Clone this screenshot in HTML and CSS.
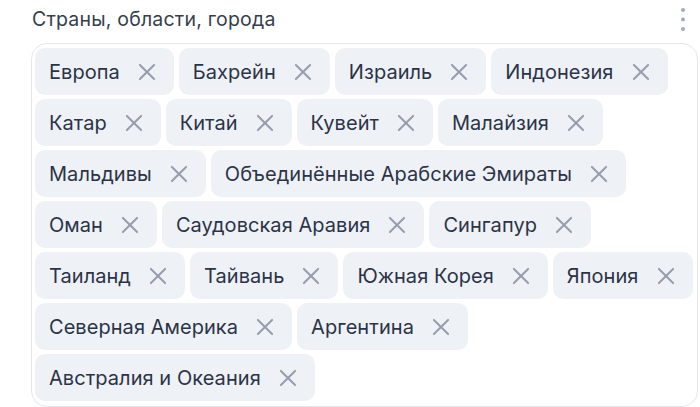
FILE: index.html
```html
<!DOCTYPE html>
<html lang="ru">
<head>
<meta charset="utf-8">
<link rel="stylesheet" href="styles.css">
</head>
<body>
<div class="field">
  <div class="field-head">
    <div class="label">Страны, области, города</div>
    <button class="more" aria-label="Ещё">
      <svg width="6" height="24" viewBox="0 0 6 24"><circle cx="3" cy="3" r="2"/><circle cx="3" cy="12.5" r="2"/><circle cx="3" cy="22" r="2"/></svg>
    </button>
  </div>
  <div class="box">
    <span class="chip">Европа<i class="x"></i></span>
    <span class="chip">Бахрейн<i class="x"></i></span>
    <span class="chip">Израиль<i class="x"></i></span>
    <span class="chip">Индонезия<i class="x"></i></span>
    <span class="chip">Катар<i class="x"></i></span>
    <span class="chip">Китай<i class="x"></i></span>
    <span class="chip">Кувейт<i class="x"></i></span>
    <span class="chip">Малайзия<i class="x"></i></span>
    <span class="chip">Мальдивы<i class="x"></i></span>
    <span class="chip">Объединённые Арабские Эмираты<i class="x"></i></span>
    <span class="chip">Оман<i class="x"></i></span>
    <span class="chip">Саудовская Аравия<i class="x"></i></span>
    <span class="chip">Сингапур<i class="x"></i></span>
    <span class="chip">Таиланд<i class="x"></i></span>
    <span class="chip">Тайвань<i class="x"></i></span>
    <span class="chip">Южная Корея<i class="x"></i></span>
    <span class="chip">Япония<i class="x"></i></span>
    <span class="chip">Северная Америка<i class="x"></i></span>
    <span class="chip">Аргентина<i class="x"></i></span>
    <span class="chip">Австралия и Океания<i class="x"></i></span>
  </div>
</div>
</body>
</html>
```

FILE: styles.css
```css
html, body {
  margin: 0;
  padding: 0;
  background: #ffffff;
}
body {
  font-family: Inter, "Noto Sans", sans-serif;
  color: #2b3447;
}
.field {
  padding: 5px 2px 0 31px;
}
.field-head {
  display: flex;
  justify-content: space-between;
  align-items: flex-start;
  height: 38px;
}
.label {
  font-size: 19.5px;
  line-height: 28px;
  letter-spacing: 0.2px;
  color: #363e4d;
  padding-left: 1px;
}
.more {
  border: 0;
  background: none;
  padding: 0;
  margin: 2px 12px 0 0;
  width: 6px;
  height: 24px;
  fill: #a5abba;
}
.more svg {
  display: block;
}
.box {
  border: 1px solid #e4e7ed;
  border-radius: 16px;
  padding: 4px 2px 4px 3px;
  display: flex;
  flex-wrap: wrap;
  gap: 4px 5px;
  min-height: 364px;
  align-content: flex-start;
  box-sizing: border-box;
}
.chip {
  display: inline-flex;
  align-items: center;
  height: 47px;
  box-sizing: border-box;
  padding: 0 18px 0 14px;
  background: #eef1f6;
  border-radius: 10px;
  font-size: 20px;
  line-height: 24px;
  letter-spacing: 0.05px;
  color: #2b3447;
  white-space: nowrap;
}
.x {
  position: relative;
  width: 18px;
  height: 18px;
  margin-left: 18px;
  display: inline-block;
}
.x::before, .x::after {
  content: "";
  position: absolute;
  left: -2px;
  top: 8px;
  width: 22px;
  height: 2px;
  background: #969dae;
  border-radius: 1px;
}
.x::before { transform: rotate(45deg); }
.x::after { transform: rotate(-45deg); }
```
